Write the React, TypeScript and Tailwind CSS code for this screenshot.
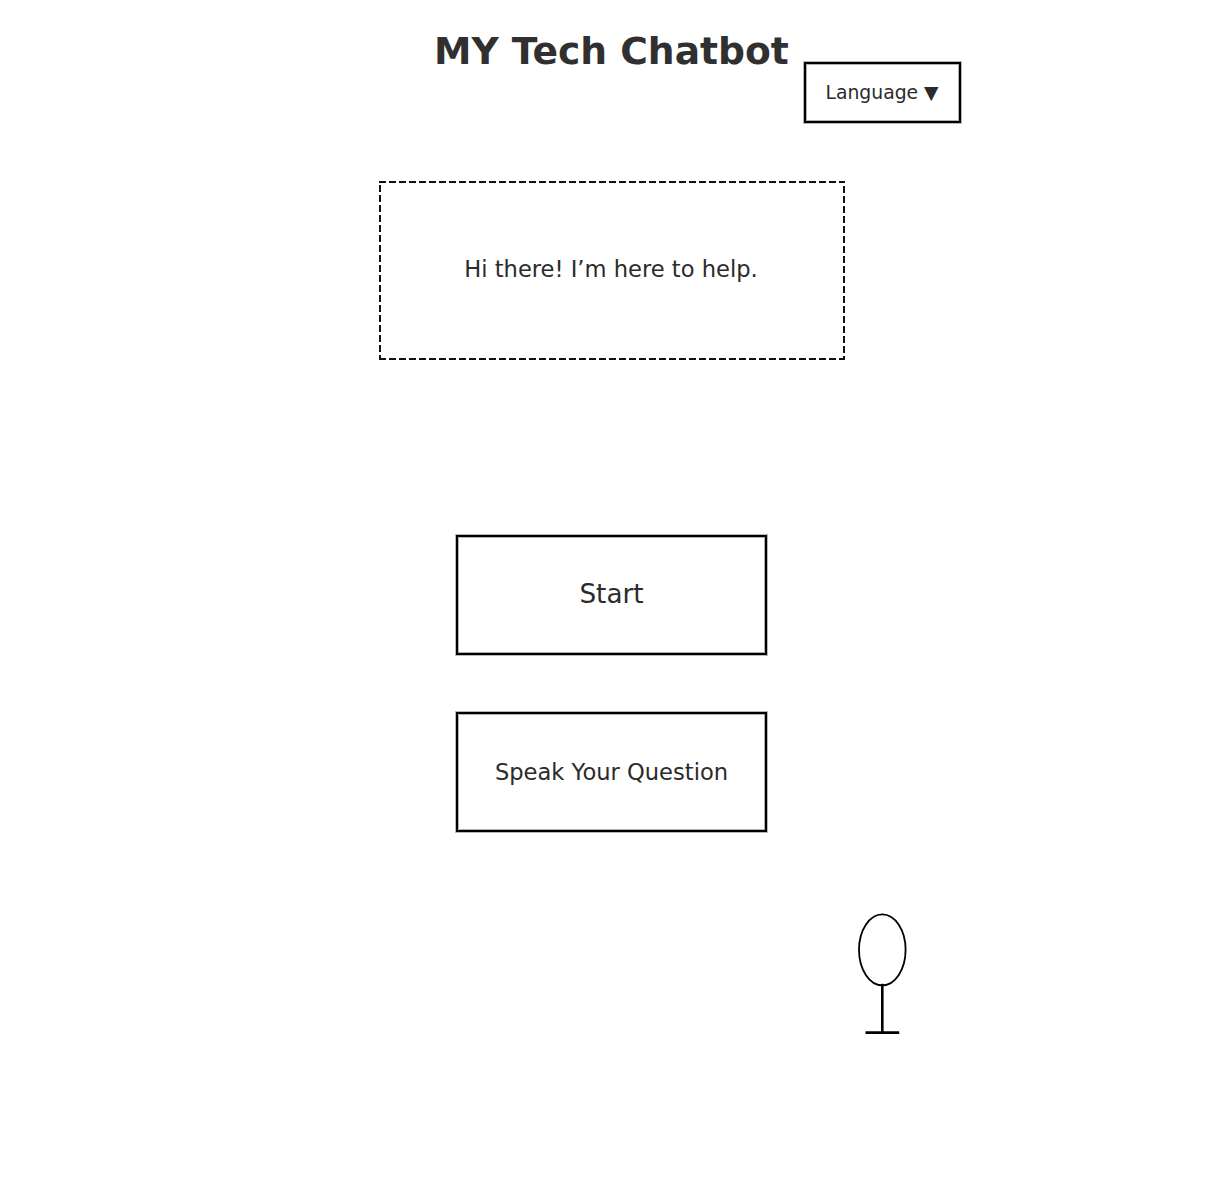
const box =
  'flex items-center justify-center border-2 border-black shadow-[0_0_0_1px_#b8b8b8,inset_0_0_0_1px_#b0b0b0]';

function Microphone() {
  return (
    <svg width="50" height="124" viewBox="857 912 50 124" fill="none" stroke="#000" className="mt-[80px] ml-[857px]" aria-label="Microphone">
      <ellipse cx="882.3" cy="949.8" rx="23.3" ry="35.5" strokeWidth="1.8" />
      <path d="M882.3 983.8V1032.6" strokeWidth="2.6" />
      <path d="M865.5 1032.6H899.2" strokeWidth="2.6" />
    </svg>
  );
}

function Greeting() {
  return (
    <section className="relative mt-[58px] ml-[379px] flex h-[179px] w-[466px] items-center justify-center text-[22.6px]">
      <span className="absolute inset-x-0 top-0 h-[2px] bg-[repeating-linear-gradient(90deg,#111_0_7px,transparent_7px_10px)]" />
      <span className="absolute inset-x-0 bottom-0 h-[2px] bg-[repeating-linear-gradient(90deg,#111_0_7px,transparent_7px_10px)]" />
      <span className="absolute inset-y-0 left-0 w-[2px] bg-[repeating-linear-gradient(180deg,#111_0_1px,transparent_1px_4px,#111_4px_10px)]" />
      <span className="absolute inset-y-0 right-0 w-[2px] bg-[repeating-linear-gradient(180deg,#111_0_2px,transparent_2px_5px,#111_5px_10px)]" />
      <p className="pr-0.5 pb-[2px]">Hi there! I’m here to help.</p>
    </section>
  );
}

export default function App() {
  return (
    <main className="h-[1177px] w-[1213px] overflow-hidden bg-white font-['DejaVu_Sans',sans-serif] text-[#2b2b2b]">
      <header className="flex h-[123px] items-start pl-[434px]">
        <h1 className="mt-[26px] w-[370px] whitespace-nowrap text-[37.65px] leading-[50px] font-bold text-[#303030]">MY Tech Chatbot</h1>
        <button className={`${box} mt-[62px] h-[61px] w-[157px] pt-[2px] pr-px text-[18.8px]`}>Language ▼</button>
      </header>
      <Greeting />
      <div className="mt-[175px] ml-[456px] flex w-[311px] flex-col gap-[57px]">
        <button className={`${box} h-[120px] text-[26.3px]`}>Start</button>
        <button className={`${box} h-[120px] pt-[2px] text-[22.6px]`}>Speak Your Question</button>
      </div>
      <Microphone />
    </main>
  );
}
